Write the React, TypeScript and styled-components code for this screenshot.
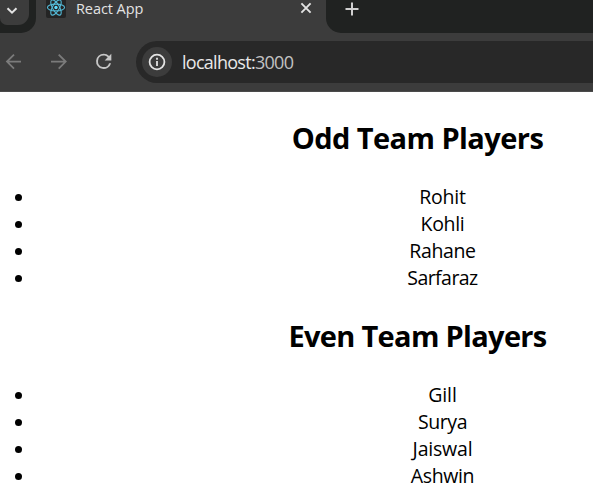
import React from "react";
import styled, { createGlobalStyle } from "styled-components";

const GlobalStyle = createGlobalStyle`
  * { box-sizing: border-box; }
  html, body { margin: 0; padding: 0; background: #fff; overflow: hidden; }
`;

const Window = styled.div`
  width: 593px;
  height: 504px;
  overflow: hidden;
  background: #fff;
  color: #000;
  font-family: "Open Sans", "Noto Sans", sans-serif;
`;

const TabStrip = styled.div`
  display: flex;
  height: 33px;
  background: #3c3c3c;
`;

const StripStart = styled.div`
  width: 36px;
  height: 33px;
  background: #202221;
  border-bottom-right-radius: 15px;
`;

const TabSearch = styled.div`
  width: 29px;
  height: 25px;
  padding: 1px 0 0 5px;
  background: #3c3c3c;
  border-radius: 0 0 11px 7px;
`;

const Tab = styled.div`
  display: flex;
  width: 290px;
  height: 18px;
  padding: 0 13px 0 10px;
  align-items: flex-start;
`;

const Favicon = styled.div`
  width: 20px;
  height: 18px;
  overflow: hidden;
  background: #242424;
  border-radius: 0 0 2px 2px;
`;

const TabTitle = styled.span`
  flex: 1;
  margin-left: 10px;
  color: #e3e3e3;
  font-size: 14.5px;
  line-height: 18px;
  letter-spacing: -0.08px;
`;

const StripEnd = styled.div`
  flex: 1;
  height: 33px;
  padding: 0 0 0 18px;
  background: #202221;
  border-bottom-left-radius: 15px;
`;

const Toolbar = styled.div`
  display: flex;
  height: 59px;
  padding-top: 8px;
  background: #3c3c3c;
  border-bottom: 1px solid #4b4b4b;
`;

const NavButtons = styled.div`
  display: flex;
  width: 136px;
  height: 42px;
  padding-left: 4px;
  gap: 25px;
  align-items: center;
`;

const AddressBar = styled.div`
  display: flex;
  flex: 1;
  height: 42px;
  padding-left: 6px;
  align-items: center;
  background: #282828;
  border-radius: 21px 0 0 21px;
`;

const SiteInfo = styled.div`
  display: flex;
  width: 30px;
  height: 30px;
  align-items: center;
  justify-content: center;
  background: #3c3c3c;
  border-radius: 50%;
`;

const Address = styled.span`
  margin-left: 10px;
  color: #e8e8e8;
  font-size: 18px;
  line-height: 24px;
  letter-spacing: -0.72px;
`;

const Port = styled.span`
  color: #c2c2c2;
`;

const Page = styled.main`
  width: 835px;
  padding-top: 26px;
  text-align: center;
`;

const Team = styled.section`
  height: 198px;
`;

const TeamTitle = styled.h2<{ $tracking: number }>`
  margin: 0;
  font-size: 29px;
  font-weight: 700;
  line-height: 40px;
  letter-spacing: ${(p) => p.$tracking}px;
`;

const PlayerList = styled.ul`
  margin: 26px 0 0;
  padding: 0;
  list-style: none;
`;

const Player = styled.li`
  display: flex;
  height: 27px;
  align-items: center;
  font-size: 19.5px;

  &::before {
    content: "";
    width: 7px;
    height: 7px;
    margin: 0 28px 0 15px;
    border-radius: 50%;
    background: #000;
  }
`;

const PlayerName = styled.span<{ $tracking: number }>`
  flex: 1;
  padding-bottom: 2px;
  line-height: 25px;
  letter-spacing: ${(p) => p.$tracking}px;
`;

const teams = [
  {
    title: "Odd Team Players",
    tracking: -0.56,
    players: [
      { name: "Rohit", tracking: -0.25 },
      { name: "Kohli", tracking: -0.3 },
      { name: "Rahane", tracking: -0.35 },
      { name: "Sarfaraz", tracking: -0.55 },
    ],
  },
  {
    title: "Even Team Players",
    tracking: -0.68,
    players: [
      { name: "Gill", tracking: -0.1 },
      { name: "Surya", tracking: -0.4 },
      { name: "Jaiswal", tracking: -0.2 },
      { name: "Ashwin", tracking: -0.35 },
    ],
  },
];

const ChevronIcon = () => (
  <svg width="14" height="14" viewBox="0 0 14 14" fill="none" stroke="#e3e3e3" strokeWidth="2">
    <path d="M2.5 4.2 7 8.7l4.5-4.5" />
  </svg>
);

const ReactLogo = () => (
  <svg width="20" height="18" viewBox="0 0 20 18" fill="none" stroke="#53b9d6" strokeWidth="1.1">
    <g transform="translate(10 7.5)">
      <ellipse rx="8.6" ry="3.4" />
      <ellipse rx="8.6" ry="3.4" transform="rotate(60)" />
      <ellipse rx="8.6" ry="3.4" transform="rotate(120)" />
      <circle r="1.7" fill="#61dafb" stroke="none" />
    </g>
  </svg>
);

const CloseIcon = () => (
  <svg width="14" height="16" viewBox="0 0 14 16" fill="none" stroke="#e3e3e3" strokeWidth="1.9">
    <path d="m2.4 3.4 9.2 9.2M11.6 3.4l-9.2 9.2" />
  </svg>
);

const PlusIcon = () => (
  <svg width="16" height="16" viewBox="0 0 16 16" fill="none" stroke="#d0d0d0" strokeWidth="2">
    <path d="M8 1.5v13M1.5 8h13" />
  </svg>
);

const ArrowIcon = ({ forward = false }: { forward?: boolean }) => (
  <svg width="20" height="20" viewBox="0 0 20 20" fill="none" stroke="#7b7b7b" strokeWidth="1.8">
    <path d={forward ? "M2 9.6h15M9.7 2.6l7 7-7 7" : "M17 9.6H3M10 2.6l-7 7 7 7"} />
  </svg>
);

const ReloadIcon = () => (
  <svg width="20" height="20" viewBox="1.8 2.2 21 21" fill="#c7c7c7">
    <path d="M17.65 6.35A7.96 7.96 0 0 0 12 4a8 8 0 1 0 7.73 10h-2.08A6 6 0 1 1 12 6c1.66 0 3.14.69 4.22 1.78L13 11h7V4z" />
  </svg>
);

const InfoIcon = () => (
  <svg width="18" height="18" viewBox="0 0 18 18" fill="none" stroke="#e3e3e3" strokeWidth="1.8">
    <circle cx="9" cy="9" r="7.4" />
    <path d="M9 8v5M9 4.8v2" />
  </svg>
);

export default function App() {
  return (
    <Window>
      <GlobalStyle />
      <TabStrip>
        <StripStart>
          <TabSearch><ChevronIcon /></TabSearch>
        </StripStart>
        <Tab>
          <Favicon><ReactLogo /></Favicon>
          <TabTitle>React App</TabTitle>
          <CloseIcon />
        </Tab>
        <StripEnd><PlusIcon /></StripEnd>
      </TabStrip>
      <Toolbar>
        <NavButtons>
          <ArrowIcon />
          <ArrowIcon forward />
          <ReloadIcon />
        </NavButtons>
        <AddressBar>
          <SiteInfo><InfoIcon /></SiteInfo>
          <Address>localhost:<Port>3000</Port></Address>
        </AddressBar>
      </Toolbar>
      <Page>
        {teams.map((team) => (
          <Team key={team.title}>
            <TeamTitle $tracking={team.tracking}>{team.title}</TeamTitle>
            <PlayerList>
              {team.players.map(({ name, tracking }) => (
                <Player key={name}>
                  <PlayerName $tracking={tracking}>{name}</PlayerName>
                </Player>
              ))}
            </PlayerList>
          </Team>
        ))}
      </Page>
    </Window>
  );
}
